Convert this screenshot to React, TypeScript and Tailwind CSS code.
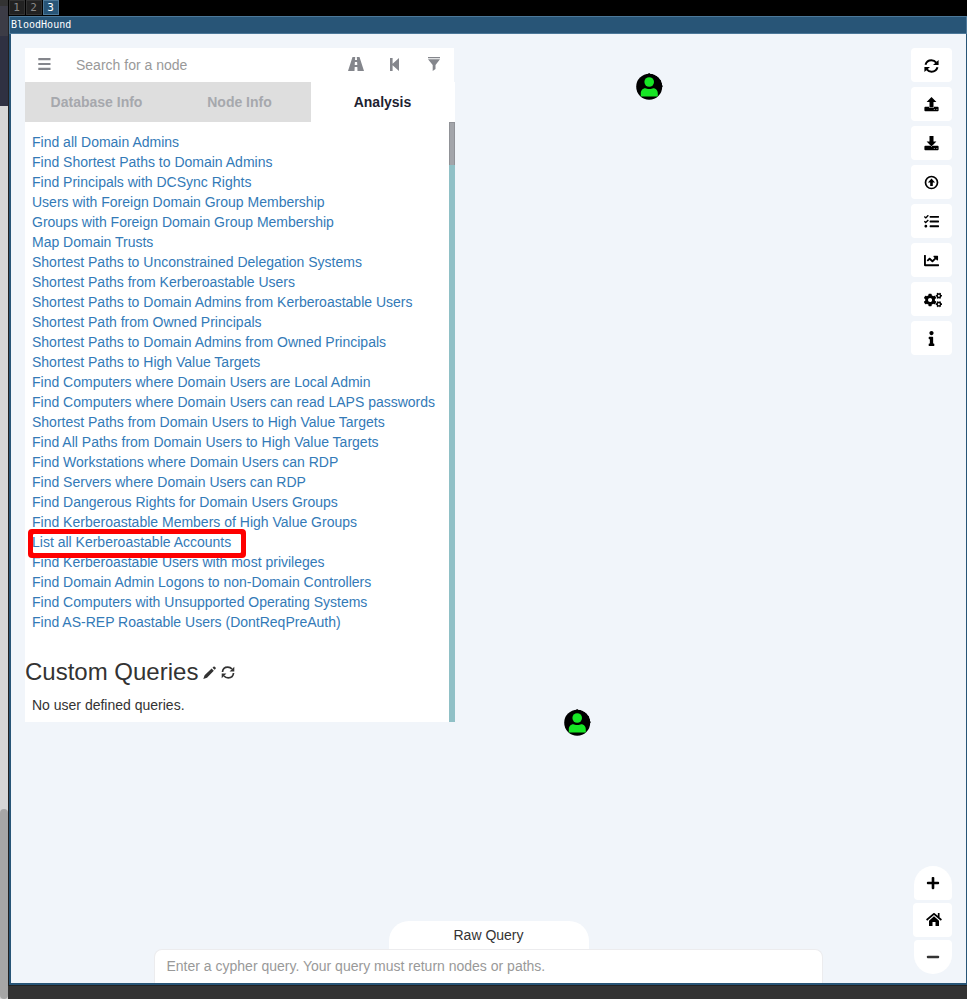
import type { ReactNode } from "react";
import { FaTasks, FaChartLine, FaCogs, FaInfo, FaPlus, FaMinus } from "react-icons/fa";

const queries = [
  "Find all Domain Admins",
  "Find Shortest Paths to Domain Admins",
  "Find Principals with DCSync Rights",
  "Users with Foreign Domain Group Membership",
  "Groups with Foreign Domain Group Membership",
  "Map Domain Trusts",
  "Shortest Paths to Unconstrained Delegation Systems",
  "Shortest Paths from Kerberoastable Users",
  "Shortest Paths to Domain Admins from Kerberoastable Users",
  "Shortest Path from Owned Principals",
  "Shortest Paths to Domain Admins from Owned Principals",
  "Shortest Paths to High Value Targets",
  "Find Computers where Domain Users are Local Admin",
  "Find Computers where Domain Users can read LAPS passwords",
  "Shortest Paths from Domain Users to High Value Targets",
  "Find All Paths from Domain Users to High Value Targets",
  "Find Workstations where Domain Users can RDP",
  "Find Servers where Domain Users can RDP",
  "Find Dangerous Rights for Domain Users Groups",
  "Find Kerberoastable Members of High Value Groups",
  "List all Kerberoastable Accounts",
  "Find Kerberoastable Users with most privileges",
  "Find Domain Admin Logons to non-Domain Controllers",
  "Find Computers with Unsupported Operating Systems",
  "Find AS-REP Roastable Users (DontReqPreAuth)",
];

const tools: ReactNode[] = [
  <RefreshIcon />,
  <TransferIcon arrow="M7.500 0L12.400 5H9.500V10.500H5.500V5H2.600z" />,
  <TransferIcon arrow="M5.500 0H9.500V5.500H12.400L7.500 10.500L2.600 5.500H5.500z" />,
  <CircleUpIcon />,
  <FaTasks size={15} />,
  <FaChartLine size={15} />,
  <FaCogs size={18} className="relative left-[1.500px]" />,
  <FaInfo size={15} />,
];

function RefreshIcon() {
  return (
    <svg width="15" height="14" viewBox="0 0 15 14" fill="none" stroke="currentColor" strokeWidth="2">
      <path d="M1.500 5.700C2.300 3 4.600 1.300 7.400 1.300c1.900 0 3.600.8 4.800 2.300M13.500 8.300C12.700 11 10.400 12.700 7.600 12.700c-1.900 0-3.600-.8-4.800-2.300" />
      <path d="M14.600.9v5.200H9zM.4 13.100V7.900H6z" fill="currentColor" stroke="none" />
    </svg>
  );
}

function TransferIcon({ arrow }: { arrow: string }) {
  return (
    <svg width="15" height="15" viewBox="0 0 15 15">
      <path d="M1.300 9.800h12.400q.9 0 .9.900v2.600q0 .9-.9.900H1.300q-.9 0-.9-.9v-2.600q0-.9.900-.9z" fill="currentColor" />
      <path d={arrow} fill="none" stroke="#fff" strokeWidth="1" />
      <path d={arrow} fill="currentColor" />
      <path d="M9.800 12.200h1.100v.9H9.800zM12.300 12.200h1.100v.9h-1.100z" fill="#bbb" />
    </svg>
  );
}

function CircleUpIcon() {
  return (
    <svg className="-mt-px" width="15" height="15" viewBox="0 0 15 15">
      <circle cx="7.500" cy="7.500" r="6" fill="none" stroke="currentColor" strokeWidth="1.700" />
      <path d="M7.500 3.500l3.600 3.900H8.800V11H6.200V7.400H3.900z" fill="currentColor" />
    </svg>
  );
}

function UserNode({ className }: { className: string }) {
  return (
    <svg className={`absolute ${className}`} width="28" height="28" viewBox="0 0 28 28">
      <circle cx="14.200" cy="13.700" r="13" fill="#000" />
      <path d="M13.500 2V0h1.200v1.500l3-.5v1h2v1h2v2h2v2h2v3h1v2.500h1v1.200h-2z" fill="#000" />
      <circle cx="14.200" cy="9" r="4.800" fill="#17e625" />
      <path d="M5.800 23.500v-3c0-3 2-5.200 4.500-5.200 1.200 0 2 .8 4 .8s2.800-.8 4-.8c2.500 0 4.500 2.200 4.500 5.200v3z" fill="#17e625" />
    </svg>
  );
}

function Workspace({ n, active }: { n: number; active?: boolean }) {
  return (
    <div className={`flex h-[15px] w-4 items-center justify-center border pr-px font-['DejaVu_Sans_Mono',monospace] text-[11px] leading-none ${active ? "border-[#4c7899] bg-[#285577] text-white" : "border-[#333] bg-[#222] text-[#888]"}`}>
      {n}
    </div>
  );
}

function SidePanel() {
  return (
    <section className="ml-[14px] mt-[14px] h-[674px] w-[430px] shrink-0">
      <div className="flex h-[34px] w-[429px] items-center bg-white text-[#84868c]">
        <svg className="mb-[2px] ml-[13px]" width="13" height="12" viewBox="0 0 13 12" fill="currentColor">
          <path d="M.3 0h12.200v2.300H.3zM.3 4.900h12.200v2.200H.3zM.3 9.700h12.200V12H.3z" />
        </svg>
        <span className="ml-[25px] text-[14px] text-[#999]">Search for a node</span>
        <div className="mb-[2px] ml-auto flex items-center">
          <svg width="16" height="14" viewBox="0 0 16 14" fill="currentColor">
            <path d="M4.500 0h2.700L7 3h2L8.800 0h2.700L16 14H9.500L9.300 10H6.700L6.500 14H0zM6.900 5l-.2 3h2.600l-.2-3z" />
          </svg>
          <svg className="ml-[26px] mt-px" width="9" height="13" viewBox="0 0 9 13" fill="currentColor">
            <path d="M0 0h2.600v5.800L9 0v13L2.600 7.200V13H0z" />
          </svg>
          <svg className="ml-[29px] mr-[14px]" width="12" height="14" viewBox="0 0 12 14" fill="currentColor">
            <path d="M0 0h12v1.300H0zM0 2.300h12L7.500 8v4L4.700 14V8z" />
          </svg>
        </div>
      </div>
      <nav className="flex h-10 w-full text-center text-[14px] font-bold leading-10">
        <div className="w-[143px] bg-[#dedede] text-[#a6a8ad]">Database Info</div>
        <div className="w-[143px] bg-[#dedede] text-[#a6a8ad]">Node Info</div>
        <div className="w-[144px] bg-white pr-px text-[#1d2231]">Analysis</div>
      </nav>
      <div className="flex h-[600px] bg-white">
        <div className="w-[424px] pt-[10px]">
          <ul>
            {queries.map((q, i) => (
              <li key={q} className="relative h-5 whitespace-nowrap pl-[7px] text-[14px] leading-5 text-[#337ab7]">
                {q}
                {i === 20 && <div className="absolute left-[3px] top-[-3px] z-10 h-[29px] w-[218px] rounded-[4px] border-[5px] border-[#fe0000] after:absolute after:inset-[-1px] after:rounded-[2px] after:border after:border-[#fe0000]" />}
              </li>
            ))}
          </ul>
          <div className="mt-[27px] flex h-[26px] items-center text-[#333]">
            <h3 className="text-[24px] leading-[26px]">Custom Queries</h3>
            <svg className="ml-[5px] mt-px" width="13" height="13" viewBox="0 0 13 13" fill="currentColor">
              <path d="M.3 13l1.300-3.700L8.600 2.500l2.200 2.200L4 11.700zM9.500 1.700l1-1c.4-.4.800-.4 1.200 0l.9.900c.4.400.4.800 0 1.200l-1 1z" />
            </svg>
            <svg className="ml-[5px] mt-px" width="14" height="13" viewBox="0 0 14 13" fill="none" stroke="currentColor" strokeWidth="1.700">
              <path d="M1.500 6C1.700 3 4 1.200 6.800 1.200c1.800 0 3.200.7 4.200 1.800M12.500 7c-.2 3-2.500 4.800-5.300 4.800-1.800 0-3.200-.7-4.200-1.800" />
              <path d="M13.300.8v4.700H8.600zM.7 12.200V7.500h4.700z" fill="currentColor" stroke="none" />
            </svg>
          </div>
          <p className="mt-[10px] pl-[7px] text-[14px] leading-5 text-[#333]">No user defined queries.</p>
        </div>
        <div className="w-[6px] bg-[#90c0c6]">
          <div className="h-[43px] border-x border-t border-[#909297] bg-[#a3a5aa]" />
        </div>
      </div>
    </section>
  );
}

export default function App() {
  return (
    <div className="flex h-[999px] w-[967px] overflow-hidden bg-[#333] font-['Liberation_Sans',Arial,sans-serif]">
      <aside className="flex w-2 shrink-0 flex-col bg-[#d6d6d6]">
        <div className="h-[6px] bg-[#333]" />
        <div className="h-[30px] bg-[#3c3c46]" />
        <div className="h-[70px] bg-[#2f3142]" />
        <div className="mt-auto h-[190px] rounded-[4px] bg-[#a6a6a6]" />
      </aside>
      <div className="flex w-[959px] flex-col">
        <div className="flex h-4 gap-px bg-black pl-px">
          <Workspace n={1} /><Workspace n={2} /><Workspace n={3} active />
        </div>
        <div className="flex h-[970px] flex-col border-b border-l border-[#222]">
          <header className="h-[18px] border border-[#4c7899] bg-[#285577] pl-px font-['DejaVu_Sans_Mono',monospace] text-[10px] leading-[15px] text-white">
            BloodHound
          </header>
          <main className="relative flex h-[951px] border-b-2 border-l-2 border-r border-[#285577] bg-[#f1f5fa]">
            <SidePanel />
            <UserNode className="left-[624px] top-[39px]" />
            <UserNode className="left-[552px] top-[675px]" />
            <div className="ml-auto mr-[14px] flex flex-col pt-[14px]">
              <div className="flex flex-col gap-[5px]">
                {tools.map((icon, i) => (
                  <button key={i} className="flex h-[34px] w-[41px] items-center justify-center rounded-[4px] bg-white pt-px text-[14px] text-black">{icon}</button>
                ))}
              </div>
              <div className="mb-[9px] mt-auto flex flex-col items-end gap-[3px] text-black">
                <button className="flex h-[34px] w-[38px] items-center justify-center rounded-b-[4px] rounded-t-[19px] bg-white"><FaPlus size={14} /></button>
                <button className="flex h-[34px] w-[39px] items-center justify-center rounded-[4px] bg-white pb-px pl-[3px]">
                  <svg width="16" height="13" viewBox="0 0 16 13" fill="currentColor">
                    <path d="M8 3.300l5 4.400V13H9.500V9h-3v4H3V7.700z" />
                    <path d="M.6 7L8 .8 15.400 7M12.700 0v4.500" fill="none" stroke="currentColor" strokeWidth="1.700" />
                  </svg>
                </button>
                <button className="flex h-[34px] w-[38px] items-center justify-center rounded-b-[19px] rounded-t-[4px] bg-white pb-px text-[#333]"><FaMinus size={14} /></button>
              </div>
            </div>
            <div className="absolute bottom-0 left-[143px] flex w-[669px] flex-col items-center">
              <div className="h-7 w-[200px] rounded-t-[20px] bg-white text-center text-[14px] leading-7 text-[#333]">Raw Query</div>
              <div className="h-[34px] w-full rounded-t-[8px] border-x border-t border-[#ececee] bg-white pl-[11.5px] text-[14px] leading-[33px] text-[#999]">
                Enter a cypher query. Your query must return nodes or paths.
              </div>
            </div>
          </main>
        </div>
      </div>
    </div>
  );
}
